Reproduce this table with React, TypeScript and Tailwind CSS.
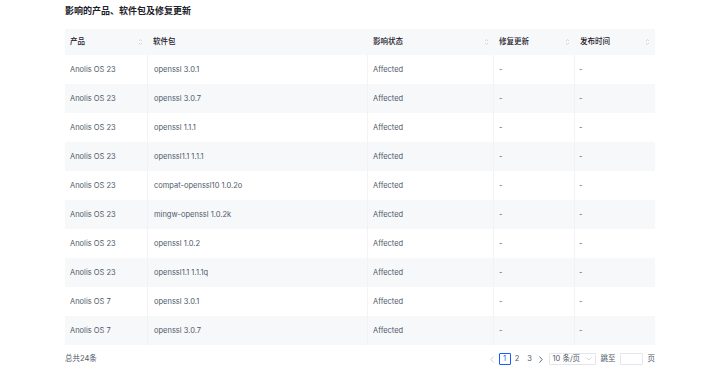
import React from "react";

const rows = [
  ["Anolis OS 23", "openssl 3.0.1"],
  ["Anolis OS 23", "openssl 3.0.7"],
  ["Anolis OS 23", "openssl 1.1.1"],
  ["Anolis OS 23", "openssl1.1 1.1.1"],
  ["Anolis OS 23", "compat-openssl10 1.0.2o"],
  ["Anolis OS 23", "mingw-openssl 1.0.2k"],
  ["Anolis OS 23", "openssl 1.0.2"],
  ["Anolis OS 23", "openssl1.1 1.1.1q"],
  ["Anolis OS 7", "openssl 3.0.1"],
  ["Anolis OS 7", "openssl 3.0.7"],
];

const SortIcon = () => (
  <svg width="5" height="8" viewBox="0 0 5 8" className="shrink-0">
    <path d="M1 3 L2.5 1.5 L4 3" fill="none" stroke="#c9cdd4" strokeWidth="0.8" />
    <path d="M1 5 L2.5 6.5 L4 5" fill="none" stroke="#c9cdd4" strokeWidth="0.8" />
  </svg>
);

const Chevron = ({ dir, color }: { dir: "l" | "r"; color: string }) => (
  <svg width="4" height="7" viewBox="0 0 4 7">
    <path
      d={dir === "l" ? "M3.5 0.5 L0.8 3.5 L3.5 6.5" : "M0.5 0.5 L3.2 3.5 L0.5 6.5"}
      fill="none"
      stroke={color}
      strokeWidth="0.9"
    />
  </svg>
);

const cols = [
  { title: "产品", w: "w-[83px]", sort: true },
  { title: "软件包", w: "w-[220px]", sort: false },
  { title: "影响状态", w: "w-[126px]", sort: true },
  { title: "修复更新", w: "w-[81px]", sort: true },
  { title: "发布时间", w: "w-[80px]", sort: true },
];

export default function App() {
  return (
    <div
      className="w-[720px] h-[375px] bg-white text-[#4e5969] overflow-hidden"
      style={{ fontFamily: "Inter, 'Noto Sans CJK SC', sans-serif" }}
    >
      <div className="px-[65px] pt-[4px]">
        <h2 className="text-[9px] font-semibold text-[#1d2129] leading-[14px]">
          影响的产品、软件包及修复更新
        </h2>
        <div className="mt-[11px] w-[590px]">
          <div className="flex h-[26px] bg-[#f7f8fa] text-[7.5px] font-medium text-[#1d2129]">
            {cols.map((c, i) => (
              <div
                key={i}
                className={`${c.w} flex items-center justify-between px-[5px]`}
              >
                <span>{c.title}</span>
                {c.sort && <SortIcon />}
              </div>
            ))}
          </div>
          {rows.map((r, i) => (
            <div
              key={i}
              className={`flex h-[29px] text-[7.5px] ${i % 2 === 1 ? "bg-[#f7f8fa]" : "bg-white"}`}
            >
              <div className="w-[83px] flex items-center px-[5px] border-r border-[#f2f3f5]">{r[0]}</div>
              <div className="w-[220px] flex items-center px-[6px] border-r border-[#f2f3f5]">{r[1]}</div>
              <div className="w-[126px] flex items-center px-[5px] border-r border-[#f2f3f5]">Affected</div>
              <div className="w-[81px] flex items-center px-[5px] border-r border-[#f2f3f5]">-</div>
              <div className="w-[80px] flex items-center px-[4px]">-</div>
            </div>
          ))}
        </div>
        <div className="mt-[2px] flex items-center justify-between w-[590px] h-[24px] text-[7.5px]">
          <span>总共24条</span>
          <div className="flex items-center text-[#4e5969]">
            <Chevron dir="l" color="#c9cdd4" />
            <span className="ml-[5px] w-[12px] h-[12px] flex items-center justify-center border border-[#165dff] text-[#165dff] rounded-[1px]">1</span>
            <span className="w-[13px] text-center">2</span>
            <span className="w-[12px] text-center">3</span>
            <span className="w-[11px] flex justify-center">
              <Chevron dir="r" color="#4e5969" />
            </span>
            <div className="ml-[2px] w-[47px] h-[12px] border border-[#e5e6eb] rounded-[1px] flex items-center justify-between px-[3px]">
              <span>10 条/页</span>
              <svg width="6" height="4" viewBox="0 0 6 4">
                <path d="M0.5 0.5 L3 3 L5.5 0.5" fill="none" stroke="#c9cdd4" strokeWidth="0.8" />
              </svg>
            </div>
            <span className="ml-[5px]">跳至</span>
            <div className="ml-[4px] w-[23px] h-[12px] border border-[#e5e6eb] rounded-[1px]" />
            <span className="ml-[5px]">页</span>
          </div>
        </div>
      </div>
    </div>
  );
}
